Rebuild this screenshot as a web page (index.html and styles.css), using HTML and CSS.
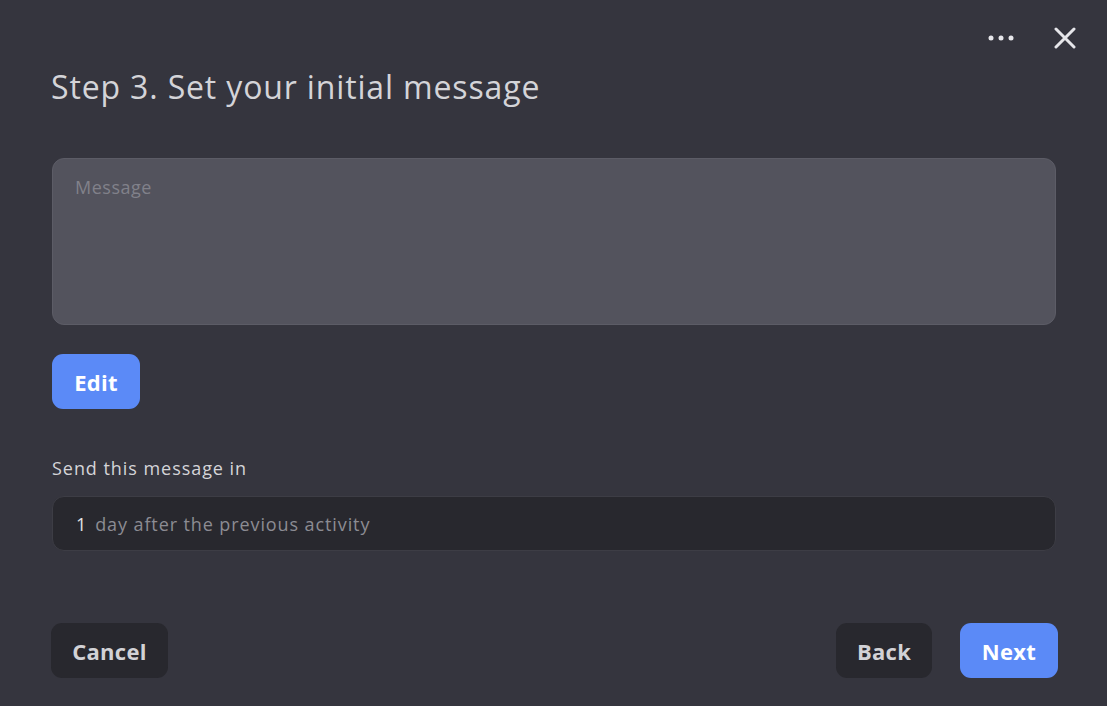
FILE: index.html
```html
<!DOCTYPE html>
<html lang="en">
<head>
    <meta charset="UTF-8">
    <meta name="viewport" content="width=device-width, initial-scale=1.0">
    <title>Step 3</title>
    <link rel="stylesheet" href="styles.css">
</head>
<body>
    <div class="dialog">
        <div class="top-bar">
            <button class="icon-btn" aria-label="More">
                <svg width="26" height="8" viewBox="0 0 26 8">
                    <circle cx="3" cy="4" r="2.5" fill="#e6e6ea"/>
                    <circle cx="13" cy="4" r="2.5" fill="#e6e6ea"/>
                    <circle cx="23" cy="4" r="2.5" fill="#e6e6ea"/>
                </svg>
            </button>
            <button class="icon-btn" aria-label="Close">
                <svg width="22" height="22" viewBox="0 0 22 22">
                    <path d="M2 2 L20 20 M20 2 L2 20" stroke="#e6e6ea" stroke-width="3" stroke-linecap="round"/>
                </svg>
            </button>
        </div>

        <h1 class="title">Step 3. Set your initial message</h1>

        <div class="message-box">
            <span class="placeholder">Message</span>
        </div>

        <button class="btn btn-primary edit-btn">Edit</button>

        <label class="field-label">Send this message in</label>
        <div class="delay-input">
            <span class="delay-value">1</span>
            <span class="delay-unit">day after the previous activity</span>
        </div>

        <div class="footer">
            <button class="btn btn-dark cancel-btn">Cancel</button>
            <div class="footer-right">
                <button class="btn btn-dark back-btn">Back</button>
                <button class="btn btn-primary next-btn">Next</button>
            </div>
        </div>
    </div>
</body>
</html>
```

FILE: styles.css
```css
body {
    margin: 0;
    height: 100vh;
    background: #35353e;
    font-family: "Open Sans", "Noto Sans", sans-serif;
    color: #d6d6da;
}
.dialog {
    padding: 0 51px 0 51px;
    display: flex;
    flex-direction: column;
}
.top-bar {
    display: flex;
    justify-content: flex-end;
    align-items: center;
    gap: 40px;
    padding-top: 27px;
    margin-right: -20px;
}
.icon-btn {
    background: none;
    border: 0;
    padding: 0;
    display: flex;
    cursor: pointer;
}
.title {
    margin: 18px 0 0;
    font-size: 32px;
    font-weight: 400;
    color: #d4d4d8;
    line-height: 40px;
    letter-spacing: 0.85px;
}
.message-box {
    margin-top: 51px;
    margin-left: 1px;
    height: 167px;
    background: #53535d;
    border: 1px solid #5c5c66;
    border-radius: 12px;
    padding: 16px 22px;
    box-sizing: border-box;
}
.placeholder {
    font-size: 18px;
    color: #81818a;
    letter-spacing: 0.5px;
}
.btn {
    font-family: "Open Sans", "Noto Sans", sans-serif;
    font-size: 22px;
    font-weight: 700;
    border: 0;
    border-radius: 11px;
    height: 55px;
    padding: 0;
    cursor: pointer;
    letter-spacing: 0.3px;
}
.btn-primary {
    background: #5b8af7;
    color: #ffffff;
}
.btn-dark {
    background: #28282e;
    color: #d2d2d6;
}
.edit-btn {
    align-self: flex-start;
    margin: 29px 0 0 1px;
    width: 88px;
}
.cancel-btn {
    width: 117px;
}
.back-btn {
    width: 96px;
}
.next-btn {
    width: 98px;
}
.field-label {
    margin: 47px 0 0 1px;
    font-size: 18px;
    line-height: 25px;
    color: #d4d4d8;
    letter-spacing: 0.95px;
}
.delay-input {
    margin: 15px 0 0 1px;
    height: 55px;
    background: #28282e;
    border: 1px solid #3d3d45;
    border-radius: 12px;
    box-sizing: border-box;
    display: flex;
    align-items: center;
    padding: 0 23px;
    gap: 8px;
    font-size: 18px;
    letter-spacing: 0.9px;
}
.delay-value {
    color: #e2e2e6;
}
.delay-unit {
    color: #8c8c93;
}
.footer {
    margin-top: 72px;
    display: flex;
    justify-content: space-between;
    margin-right: -2px;
}
.footer-right {
    display: flex;
    gap: 28px;
}
```
